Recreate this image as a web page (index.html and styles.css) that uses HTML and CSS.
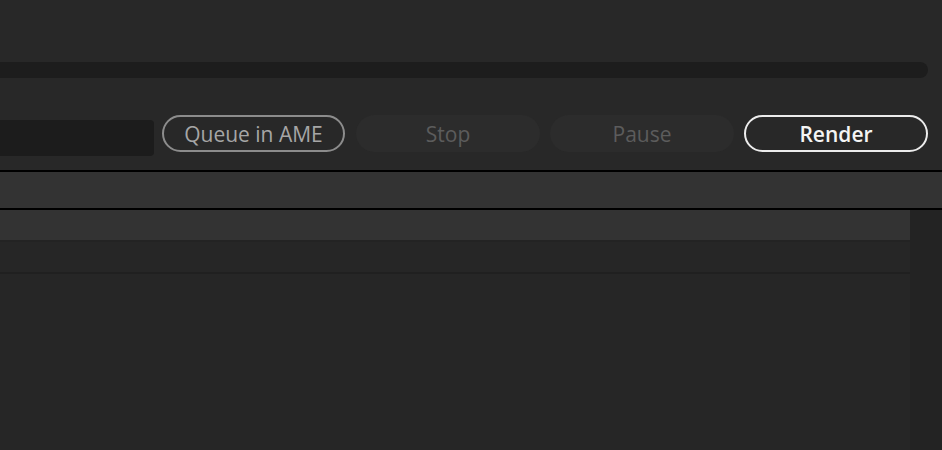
FILE: index.html
```html
<!DOCTYPE html>
<html>
<head>
<meta charset="utf-8">
<link rel="stylesheet" href="styles.css">
</head>
<body>
<div class="app">
  <section class="top">
    <div class="progress"></div>
    <div class="controls">
      <div class="field"></div>
      <button class="btn btn-outline">Queue in AME</button>
      <button class="btn btn-disabled">Stop</button>
      <button class="btn btn-disabled">Pause</button>
      <button class="btn btn-primary">Render</button>
    </div>
  </section>
  <div class="tabbar"></div>
  <section class="list">
    <div class="list-main">
      <div class="row row-head"></div>
      <div class="row"></div>
      <div class="list-body"></div>
    </div>
    <div class="list-side"></div>
  </section>
</div>
</body>
</html>
```
FILE: styles.css
```css
html, body {
  margin: 0;
  padding: 0;
  background: #282828;
  font-family: "Open Sans", "Noto Sans", sans-serif;
}
.app {
  width: 942px;
  height: 450px;
  display: flex;
  flex-direction: column;
  overflow: hidden;
}
.top {
  height: 170px;
  background: #282828;
  display: flex;
  flex-direction: column;
  padding-top: 62px;
  box-sizing: border-box;
}
.progress {
  height: 16px;
  margin-right: 14px;
  background: #1d1d1d;
  border-radius: 0 8px 8px 0;
}
.controls {
  margin-top: 37px;
  display: flex;
  align-items: flex-start;
  padding-right: 14px;
}
.field {
  width: 154px;
  height: 36px;
  margin-top: 5px;
  background: #1c1c1c;
  border-radius: 0 4px 4px 0;
  margin-right: 8px;
}
.btn {
  box-sizing: border-box;
  width: 184px;
  height: 37px;
  border-radius: 19px;
  font-family: "Open Sans", "Noto Sans", sans-serif;
  font-size: 21px;
  font-weight: 500;
  line-height: 1;
  padding: 1px 0 0 0;
  margin-right: 10px;
  display: flex;
  align-items: center;
  justify-content: center;
}
.btn:last-child { margin-right: 0; }
.btn-outline {
  width: 183px;
  background: transparent;
  border: 2px solid #8c8c8c;
  color: #a6a6a6;
  margin-right: 11px;
}
.btn-disabled {
  background: #2c2c2c;
  border: none;
  color: #5c5c5c;
}
.btn-primary {
  background: transparent;
  border: 2.5px solid #ececec;
  color: #f4f4f4;
  font-weight: 600;
}
.tabbar {
  height: 36px;
  background: #333333;
  border-top: 2px solid #000;
  border-bottom: 2px solid #000;
}
.list {
  flex: 1;
  display: flex;
}
.list-main {
  width: 910px;
  display: flex;
  flex-direction: column;
  background: #262626;
}
.row {
  height: 30px;
  background: #262626;
  border-bottom: 2px solid #202020;
}
.row-head {
  background: #333333;
  border-bottom-color: #232323;
}
.list-body {
  flex: 1;
  background: #262626;
}
.list-side {
  flex: 1;
  background: #232323;
}
```
